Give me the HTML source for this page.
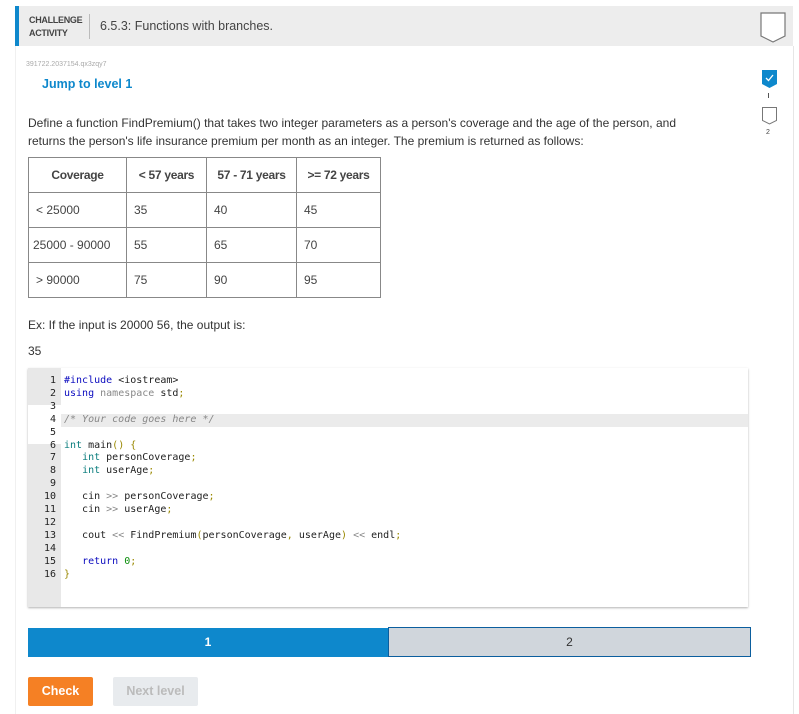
<!DOCTYPE html>
<html><head><style>
body{margin:0;width:799px;height:714px;background:#fff;font-family:"Liberation Sans",sans-serif;color:#333;position:relative;overflow:hidden}
.abs{position:absolute}
.hdr{left:15px;top:6px;width:778px;height:40px;background:#ededed}
.bar{left:15px;top:6px;width:4px;height:40px;background:#0e88cc}
.frame{left:15px;top:46px;width:777px;height:668px;border-right:1px solid #e6e6e6;border-left:1px solid #f0f0f0}
table{border-collapse:collapse;font-size:12px;color:#444;table-layout:fixed}
td{border:1px solid #888;height:34px;padding:0 7px;white-space:nowrap;overflow:hidden}
th{border:1px solid #888;height:34px;font-weight:bold;color:#444;white-space:nowrap;padding:0;letter-spacing:-.3px}
.code{left:28px;top:368px;width:720px;height:239px;background:#fff;box-shadow:0 1px 2px rgba(0,0,0,.3)}
.gut{left:0;top:0;width:33px;height:239px;background:#e8e8e8}
pre{margin:0;font-family:"DejaVu Sans Mono","Liberation Mono",monospace;font-size:10px;line-height:12.9px;color:#222}
.k{color:#0b0bbf}.t{color:#0a7d7d}.c{color:#888;font-style:italic}.g{color:#888}.p{color:#998800}.n{color:#098d09}
</style></head><body>
<div class="abs frame"></div>
<div class="abs hdr"></div><div class="abs bar"></div>
<div class="abs" style="left:29px;top:14px;font-size:9px;line-height:13px;color:#444;font-weight:bold;letter-spacing:-.3px">CHALLENGE<br>ACTIVITY</div>
<div class="abs" style="left:89px;top:14px;width:1px;height:25px;background:#bbb"></div>
<div class="abs" style="left:100px;top:19px;font-size:12.5px;color:#444">6.5.3: Functions with branches.</div>
<svg class="abs" style="left:760px;top:12px" width="26" height="31"><path d="M1 1H25V24L13 30L1 24Z" fill="#fff" stroke="#777" stroke-width="1.2"/></svg>
<div class="abs" style="left:26px;top:61px;font-size:7px;color:#aaa">391722.2037154.qx3zqy7</div>
<div class="abs" style="left:42px;top:77px;font-size:12.5px;color:#0e88cc;font-weight:bold">Jump to level 1</div>
<svg class="abs" style="left:762px;top:70px" width="16" height="20"><path d="M0 0H15V14L7.5 18L0 14Z" fill="#0e88cc"/><path d="M4 8L6.5 10.5L11 5" stroke="#fff" stroke-width="1.3" fill="none"/></svg>
<div class="abs" style="left:768px;top:93px;width:1px;height:5px;background:#555"></div>
<svg class="abs" style="left:762px;top:107px" width="16" height="20"><path d="M.5 .5H14.5V13.5L7.5 17L.5 13.5Z" fill="#fff" stroke="#777"/></svg>
<div class="abs" style="left:766px;top:129px;font-size:7px;color:#444">2</div>
<div class="abs" style="left:28px;top:114px;width:720px;font-size:12px;line-height:18px;color:#333;white-space:nowrap">Define a function FindPremium() that takes two integer parameters as a person's coverage and the age of the person, and<br>returns the person's life insurance premium per month as an integer. The premium is returned as follows:</div>
<table class="abs" style="left:28px;top:157px;width:352px;border:1.5px solid #444">
<colgroup><col style="width:98px"><col style="width:80px"><col style="width:90px"><col style="width:84px"></colgroup>
<tr><th>Coverage</th><th>&lt; 57 years</th><th>57 - 71 years</th><th>&gt;= 72 years</th></tr>
<tr><td>&lt; 25000</td><td>35</td><td>40</td><td>45</td></tr>
<tr><td style="padding:0 4px">25000 - 90000</td><td>55</td><td>65</td><td>70</td></tr>
<tr><td>&gt; 90000</td><td>75</td><td>90</td><td>95</td></tr>
</table>
<div class="abs" style="left:28px;top:318px;font-size:12px;color:#333">Ex: If the input is 20000 56, the output is:</div>
<div class="abs" style="left:28px;top:344px;font-size:12px;color:#333">35</div>
<div class="abs code">
<div class="abs gut"></div>
<div class="abs" style="left:0;top:37px;width:33px;height:39px;background:#fff"></div>
<div class="abs" style="left:33px;top:46px;width:687px;height:13px;background:#ebebeb"></div>
<pre class="abs" style="left:0;top:7px;width:28px;text-align:right">1
2
3
4
5
6
7
8
9
10
11
12
13
14
15
16</pre>
<pre class="abs" style="left:36px;top:7px"><span class="k">#include</span> &lt;iostream&gt;
<span class="k">using</span> <span class="g">namespace</span> std<span class="p">;</span>

<span class="c">/* Your code goes here */</span>

<span class="t">int</span> main<span class="p">() {</span>
   <span class="t">int</span> personCoverage<span class="p">;</span>
   <span class="t">int</span> userAge<span class="p">;</span>

   cin <span class="g">&gt;&gt;</span> personCoverage<span class="p">;</span>
   cin <span class="g">&gt;&gt;</span> userAge<span class="p">;</span>

   cout <span class="g">&lt;&lt;</span> FindPremium<span class="p">(</span>personCoverage<span class="p">,</span> userAge<span class="p">)</span> <span class="g">&lt;&lt;</span> endl<span class="p">;</span>

   <span class="k">return</span> <span class="n">0</span><span class="p">;</span>
<span class="p">}</span></pre>
</div>
<div class="abs" style="left:28px;top:628px;width:360px;height:29px;background:#0e88cc;color:#fff;font-weight:bold;font-size:12px;text-align:center;line-height:29px">1</div>
<div class="abs" style="left:388px;top:627px;width:361px;height:28px;background:#d0d6dc;border:1.5px solid #0b5e9e;color:#333;font-size:12px;text-align:center;line-height:28px">2</div>
<div class="abs" style="left:28px;top:677px;width:65px;height:29px;background:#f58024;color:#fff;font-weight:bold;font-size:12.5px;text-align:center;line-height:29px;border-radius:2px">Check</div>
<div class="abs" style="left:113px;top:677px;width:85px;height:29px;background:#e8ebee;color:#bbb;font-weight:bold;font-size:12.5px;text-align:center;line-height:29px;border-radius:2px">Next level</div>
</body></html>
